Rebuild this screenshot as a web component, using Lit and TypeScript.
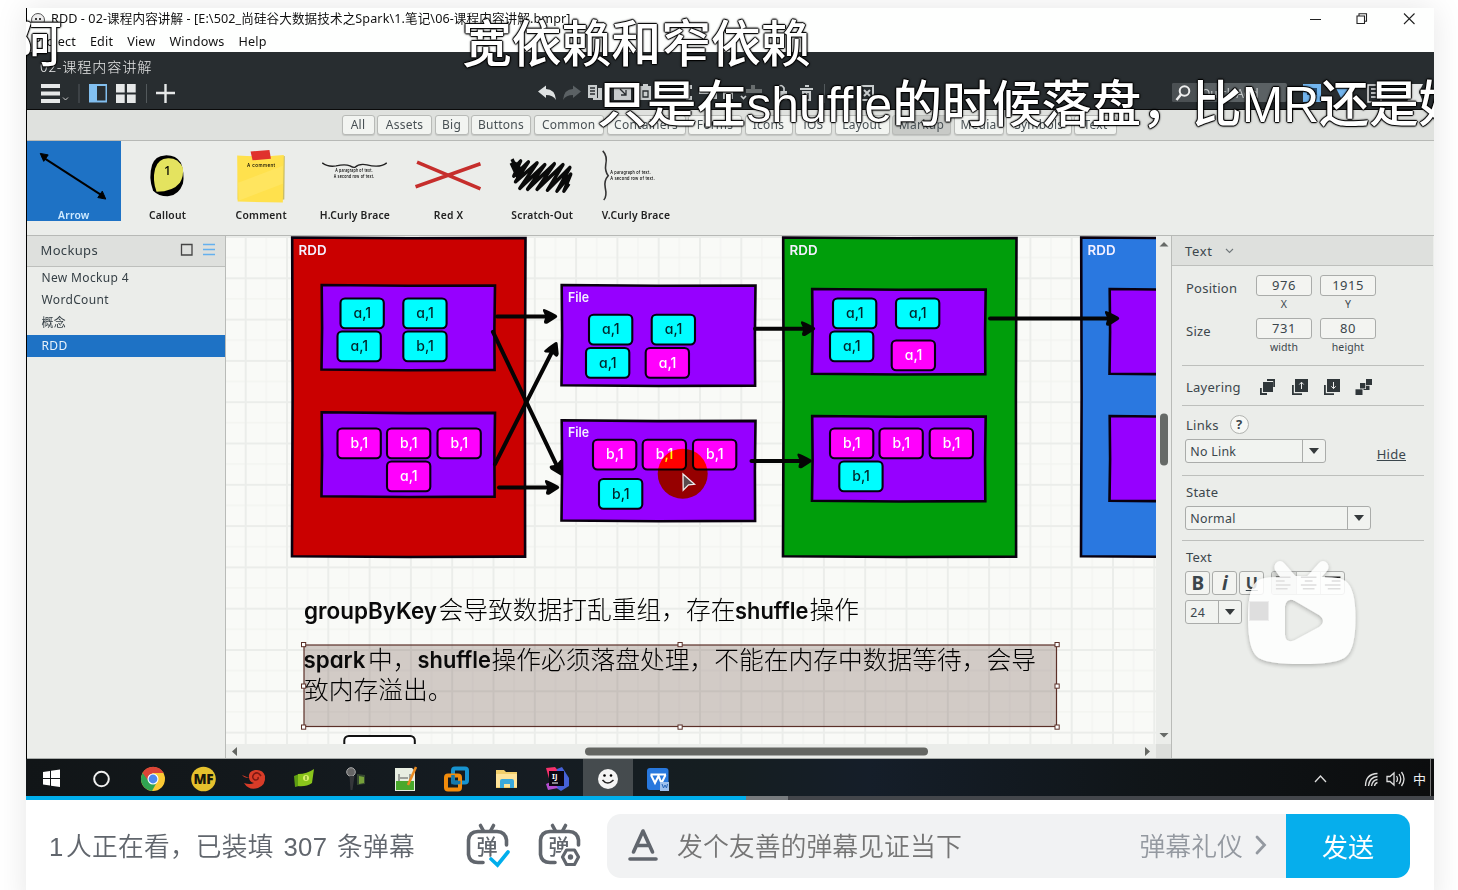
import { LitElement, html, svg, css } from "lit";
import { customElement } from "lit/decorators.js";

type Chip = [number, number, string, boolean];
const CHIPS: Chip[] = [
  [339.5, 297.5, "a,1", true], [402.3, 297.5, "a,1", true], [336.5, 330.5, "a,1", true], [402.3, 330.5, "b,1", true],
  [336.5, 427.5, "b,1", false], [386, 427.5, "b,1", false], [436.5, 427.5, "b,1", false], [386, 460.5, "a,1", false],
  [588, 313.7, "a,1", true], [650.7, 313.7, "a,1", true], [585, 347, "a,1", true], [644.7, 347, "a,1", false],
  [592, 438.7, "b,1", false], [641.7, 438.7, "b,1", false], [692, 438.7, "b,1", false], [598, 478, "b,1", true],
  [832, 297.5, "a,1", true], [895, 297.5, "a,1", true], [829, 330.5, "a,1", true], [890.7, 339.5, "a,1", false],
  [829, 427.5, "b,1", false], [878.5, 427.5, "b,1", false], [928.7, 427.5, "b,1", false], [838.3, 460.5, "b,1", true],
];
const BOXES: [number, number, number, number, string, string][] = [
  [291, 236.5, 235.5, 321.5, "#ca0000", "RDD"],
  [782, 236.5, 235.5, 321.5, "#009e0b", "RDD"],
  [1080, 236.5, 235.5, 321.5, "#2a78e0", "RDD"],
  [320.5, 284, 175.5, 87.3, "#9600ff", ""],
  [320.5, 411.3, 175.5, 86.7, "#9600ff", ""],
  [560.5, 284, 196, 103, "#9600ff", "File"],
  [560.5, 419.3, 196, 103, "#9600ff", "File"],
  [811, 288, 175.7, 87.5, "#9600ff", ""],
  [811, 415, 175.7, 87.5, "#9600ff", ""],
  [1108.5, 288, 175.7, 87.5, "#9600ff", ""],
  [1108.5, 415, 175.7, 87.5, "#9600ff", ""],
];
const ARROWS: [number, number, number, number][] = [
  [496, 316.5, 557.5, 316.5], [492.5, 331, 561.5, 475.5], [494.5, 465, 557, 342], [498, 487.5, 559.5, 487.5],
  [754, 328.8, 815.5, 328.8], [750.5, 461, 812, 461], [989, 318.5, 1119.5, 318.5],
];
const TABS: [string, number][] = [
  ["All", 33], ["Assets", 55], ["Big", 34], ["Buttons", 60], ["Common", 70.5],
  ["Containers", 79], ["Forms", 54], ["Icons", 48], ["iOS", 37], ["Layout", 55],
  ["Markup", 59], ["Media", 50], ["Symbols", 65.5], ["Text", 43],
];

@customElement("mockup-canvas")
export class MockupCanvas extends LitElement {
  static styles = css`
    :host { display: block; width: 930px; height: 508px; overflow: hidden; background: #f9faf7; }
    svg { display: block; }
    .title { font: 600 13px Inter, sans-serif; fill: #f4f0ff; }
    .chip { font: 500 14.5px Inter, sans-serif; font-feature-settings: "cv11", "ss01"; }
    .latin { font: 600 22.5px Inter, sans-serif; fill: #0a0a0a; font-feature-settings: "cv11"; }
    .cjk { font: 300 24.75px "Noto Sans CJK SC", sans-serif; fill: #000; }
    .halo { mix-blend-mode: multiply; }
  `;
  private box([x, y, w, h, fill, title]: (typeof BOXES)[number]) {
    const r = x + w - 1, b = y + h - 1;
    return svg`<path d="M${x + 1.2} ${y + 1} L${x + w / 2} ${y + 1.8} L${r} ${y + 1.6} L${r - 0.6} ${y + h / 2} L${r - 0.4} ${b - 0.4} L${x + w / 2} ${b} L${x + 1} ${b - 0.8} L${x + 1.6} ${y + h / 2}Z" fill=${fill} stroke="#09000f" stroke-width="2.6"/>
      <text class="title" x=${x + 7.6} y=${y + 18} textLength=${title === "RDD" ? 28 : 21} lengthAdjust="spacingAndGlyphs">${title}</text>`;
  }
  private arrow([x1, y1, x2, y2]: (typeof ARROWS)[number]) {
    const a = (Math.atan2(y2 - y1, x2 - x1) * 180) / Math.PI;
    const len = Math.hypot(x2 - x1, y2 - y1);
    return svg`<g transform="translate(${x1} ${y1}) rotate(${a})"><path d="M1 0H${len - 7}" stroke="#050505" stroke-width="4" stroke-linecap="round"/>
      <path d="M${len - 13.5} -7.5Q${len - 10} -6.5 ${len - 1} -1.5Q${len + 0.6} 0 ${len - 1} 1.2L${len - 10} 7Q${len - 14} 8 ${len - 13.5} 5L${len - 12} 0L${len - 14.5} -5.5Q${len - 15} -7.5 ${len - 13.5} -7.5Z" fill="#050505"/></g>`;
  }
  render() {
    const handles = [[303.5, 644.5], [680, 644.5], [1057, 644.5], [303.5, 686], [1057, 686], [303.5, 727], [680, 727], [1057, 727]];
    return html`<svg width="930" height="508" viewBox="226 236 930 508">
      <defs><pattern id="grid" x="245.7" y="278.3" width="41.3" height="41.3" patternUnits="userSpaceOnUse">
        <path d="M20.6 0V41.3M0 20.6H41.3" stroke="#f2f3f0" stroke-width="1.2"/>
        <path d="M0 0V41.3M41.3 0V41.3M0 0H41.3M0 41.3H41.3" stroke="#ebedea" stroke-width="2"/>
      </pattern></defs>
      <rect x="226" y="236" width="930" height="508" fill="url(#grid)"/>
      ${BOXES.map((b) => this.box(b))}
      ${CHIPS.map(([x, y, s, cyan]) => svg`<rect x=${x + 1} y=${y + 1} width="43.3" height="29.8" rx="4.5" fill=${cyan ? "#00fdff" : "#ff00fd"} stroke="#05000f" stroke-width="2.1"/>
        <text class="chip" x=${x + 22.8} y=${y + 20.6} text-anchor="middle" textLength="17.5" lengthAdjust="spacingAndGlyphs" fill=${cyan ? "#00262b" : "#fff"}>${s}</text>`)}
      ${ARROWS.map((a) => this.arrow(a))}
      <circle class="halo" cx="682.7" cy="473.7" r="25" fill="#ffff00"/>
      <path d="M683 474l11.5 10.3-6 .6-5.3 5.3z" fill="#5a4a4c" stroke="#eee" stroke-width="1.3"/>
      <text class="latin" x="304" y="618.5" textLength="133" lengthAdjust="spacingAndGlyphs">groupByKey</text>
      <text class="cjk" x="438.5" y="619">会导致数据打乱重组，存在</text>
      <text class="latin" x="735" y="618.5" textLength="73.5" lengthAdjust="spacingAndGlyphs">shuffle</text>
      <text class="cjk" x="809.5" y="619">操作</text>
      <rect x="304" y="645" width="752.5" height="81.5" fill="#4a261b" fill-opacity=".22" stroke="#5b3028" stroke-width="1.2"/>
      <text class="latin" x="303.5" y="668" textLength="62" lengthAdjust="spacingAndGlyphs">spark</text>
      <text class="cjk" x="368" y="668.5">中，</text>
      <text class="latin" x="417.5" y="668" textLength="73.5" lengthAdjust="spacingAndGlyphs">shuffle</text>
      <text class="cjk" x="491.5" y="668.5">操作必须落盘处理，不能在内存中数据等待，会导</text>
      <text class="cjk" x="304" y="698.5">致内存溢出。</text>
      ${handles.map(([x, y]) => svg`<rect x=${x - 2} y=${y - 2} width="4.2" height="4.2" fill="#fff" stroke="#5b3028"/>`)}
      <rect x="344.3" y="736" width="70.5" height="30" rx="4.5" fill="#fff" stroke="#111" stroke-width="2"/>
    </svg>`;
  }
}

@customElement("property-panel")
export class PropertyPanel extends LitElement {
  static styles = css`
    :host { display: flex; flex-direction: column; width: 262px; height: 522px; box-sizing: border-box; border-left: 1px solid #b9bbb8; background: #ebedea; font: 13px "Noto Sans", sans-serif; color: #3b464c; letter-spacing: .25px; line-height: 18px; }
    .head { height: 30px; box-sizing: border-box; border-bottom: 1px solid #bdbfbc; background: #dee0dd; padding-left: 13px; display: flex; align-items: center; gap: 12px; letter-spacing: .7px; }
    .sec { box-sizing: border-box; margin: 0 9px 0 10px; padding: 0 0 0 4px; border-bottom: 1px solid #bdbfbc; }
    .sec.last { border: 0; }
    .pos { height: 99.5px; padding-top: 8.5px; }
    .row { display: flex; height: 43.3px; }
    .row > .lab { width: 70px; padding-top: 4px; }
    .fields { display: flex; gap: 8px; }
    .f { width: 56px; text-align: center; font-size: 10.5px; letter-spacing: .1px; line-height: 17px; }
    .in { height: 19px; border: 1px solid #aaacaa; border-radius: 3px; background: #f3f4f1; font-size: 13px; line-height: 19px; letter-spacing: .5px; }
    .lay { height: 40px; display: flex; align-items: center; padding-top: 3px; }
    .lay .lab { width: 73.3px; }
    .lay svg { display: block; }
    .links { height: 70px; padding-top: 9px; }
    .line { display: flex; align-items: center; height: 20px; gap: 11px; }
    .q { box-sizing: border-box; width: 19px; height: 19px; border: 1.5px solid #b1b3b0; border-radius: 50%; background: #f7f8f5; text-align: center; font-weight: 700; line-height: 16px; letter-spacing: 0; }
    .split { display: flex; justify-content: space-between; }
    .select { display: flex; box-sizing: border-box; height: 24px; border: 1px solid #aaacaa; border-radius: 3px; background: #f1f3f0; font-size: 12.4px; line-height: 23px; margin-left: -.7px; }
    .select .v { flex: 1; padding-left: 4px; }
    .select .d { width: 22px; border-left: 1px solid #aaacaa; display: flex; align-items: center; justify-content: center; }
    .select .d::after { content: ""; border: 5.5px solid transparent; border-top: 6px solid #353a3c; border-bottom: 0; }
    .w1 { width: 141px; margin-top: 4.7px; }
    .w2 { width: 186px; margin-top: 4.7px; }
    .w3 { width: 57px; }
    .hide { text-decoration: underline; margin: 10px 18px 0 0; }
    .state { height: 65px; padding-top: 7.5px; }
    .text { padding-top: 7.5px; }
    .btns { display: flex; gap: 2px; margin: 4.5px 0 0 -.7px; }
    .b { box-sizing: border-box; width: 25px; height: 24px; border: 1px solid #aaacaa; border-radius: 3px; background: #f3f4f1; text-align: center; font-weight: 700; font-size: 19px; line-height: 22px; letter-spacing: 0; }
    .b.i { font-style: italic; } .b.u { text-decoration: underline; font-size: 16px; }
    .al { display: flex; margin-left: 5px; width: 74px; height: 24px; box-sizing: border-box; border: 1px solid #aaacaa; border-radius: 3px; background: #f1f3f0; overflow: hidden; }
    .al svg { flex: 1; border-left: 1px solid #b9bbb8; } .al svg:first-child { background: #d8dad7; border: 0; }
    .bot { display: flex; gap: 7px; margin-top: 5px; }
    .sw { width: 20px; height: 20px; background: #222; border: 1px solid #888; box-sizing: border-box; margin-top: 1px; }
  `;
  render() {
    const ln = (a: string) => html`<svg viewBox="0 0 24 22"><path d=${a} stroke="#222" stroke-width="1.6"/></svg>`;
    return html`
      <div class="head"><span>Text</span><svg width="9" height="6"><path d="M1 1l3.5 3.5L8 1" fill="none" stroke="#70777a" stroke-width="1.1"/></svg></div>
      <div class="sec pos">
        <div class="row"><span class="lab">Position</span><div class="fields"><div class="f"><div class="in">976</div>X</div><div class="f"><div class="in">1915</div>Y</div></div></div>
        <div class="row"><span class="lab">Size</span><div class="fields"><div class="f"><div class="in">731</div>width</div><div class="f"><div class="in">80</div>height</div></div></div>
      </div>
      <div class="sec lay"><span class="lab">Layering</span>
        <svg width="115" height="18" fill="#30373a"><g><rect x="4" y="4" width="10" height="10"/><path d="M8 1h8v8h-1.800V3H8zM1 10h1.800v5H8v2H1z"/></g>
          <g transform="translate(32)"><rect x="4" y="1" width="13" height="13"/><path d="M1 7h1.800v8.200H11V17H1z"/><path d="M10.500 11V4.500M8.300 6.500l2.200-2.300 2.200 2.300" stroke="#eee" fill="none"/></g>
          <g transform="translate(64)"><rect x="4" y="1" width="13" height="13"/><path d="M1 7h1.800v8.200H11V17H1z"/><path d="M10.500 4v6.500M8.300 8.300l2.200 2.300 2.200-2.300" stroke="#eee" fill="none"/></g>
          <g transform="translate(96)"><rect x="11" y="1" width="6" height="6"/><rect x="5" y="5" width="5.300" height="5.500"/><rect x="0.500" y="11.300" width="7" height="5.700"/><path d="M11 7.800h3.500v4.200H8.500v-1H11z"/></g></svg>
      </div>
      <div class="sec links"><div class="line"><span>Links</span><span class="q">?</span></div>
        <div class="split"><div class="select w1"><span class="v">No Link</span><span class="d"></span></div><span class="hide">Hide</span></div></div>
      <div class="sec state"><div>State</div><div class="select w2"><span class="v">Normal</span><span class="d"></span></div></div>
      <div class="sec last text"><div>Text</div>
        <div class="btns"><span class="b">B</span><span class="b i">i</span><span class="b u">U</span>
          <div class="al">${ln("M4 5h15M4 9h9M4 13h15M4 17h12")}${ln("M4 5h16M8 9h8M4 13h16M6 17h12")}${ln("M4 5h16M11 9h9M4 13h16M7 17h13")}</div></div>
        <div class="bot"><div class="select w3"><span class="v">24</span><span class="d"></span></div><span class="sw"></span></div>
      </div>`;
  }
}

@customElement("app-root")
export class AppRoot extends LitElement {
  static styles = css`
    :host { display: block; width: 1458px; height: 890px; overflow: hidden; background: #fff; font-family: "Noto Sans", "Noto Sans CJK SC", sans-serif; }
    .card { position: relative; width: 1408px; height: 900px; margin: 8px 24px 0 26px; background: #fff; box-shadow: 0 0 30px rgba(0, 0, 0, .1); display: flex; flex-direction: column; }
    .page { padding-top: .02px; height: 890px; overflow: hidden; }
    .video { position: relative; height: 792px; overflow: hidden; background: #000; display: flex; flex-direction: column; }
    .app { padding-left: 1px; }
    svg { display: block; }
    .win { height: 44px; background: #fefffe; display: flex; justify-content: space-between; color: #111; font-size: 12.6px; box-sizing: border-box; }
    .cap { display: flex; height: 24px; align-items: center; gap: 5px; padding-left: 3px; letter-spacing: .09px; white-space: nowrap; line-height: 22px; }
    .cap span { padding-bottom: 2px; }
    .menu { display: flex; gap: 14px; padding-left: 6.5px; height: 19px; align-items: center; letter-spacing: .18px; }
    .ctl { margin-right: 18px; margin-top: 3.5px; }
    .dark { height: 57px; background: #282d30; color: #e6e7e7; border-bottom: 1px solid #0a0a0a; }
    .doc { font: 300 14.2px/20px "Noto Sans CJK SC", sans-serif; letter-spacing: .8px; padding: 4px 0 0 13px; height: 24px; box-sizing: border-box; }
    .tools { display: flex; padding-left: 13px; height: 33px; }
    .tabs { height: 30px; background: #dfe1de; border-bottom: 1px solid #b7b9b6; display: flex; align-items: center; gap: 2.5px; padding-left: 314.5px; }
    .tab { box-sizing: border-box; height: 20px; border: 1px solid #b8bab7; border-radius: 3px; background: #f2f4f1; color: #485054; font-size: 12px; line-height: 18px; text-align: center; letter-spacing: .25px; box-shadow: 0 1px 1px #c3c5c2; flex: none; }
    .tab.on { background: #c8cac7; }
    .pal { height: 94px; border-bottom: 1px solid #b7b9b6; background: #ebedea; display: flex; }
    .item { width: 93.7px; height: 79.5px; display: flex; flex-direction: column; color: #222; font: 600 10.3px "Noto Sans", sans-serif; text-align: center; letter-spacing: .25px; line-height: 12px; white-space: nowrap; }
    .item svg { width: 93.7px; height: 68px; }
    .item.on { background: #1e72c5; color: #cfeaff; }
    .main { display: flex; height: 522px; background: #ebedea; border-bottom: 1px solid #a9adab; }
    .side { width: 198px; border-right: 1px solid #b9bbb8; color: #353f45; font-size: 12px; letter-spacing: .35px; }
    .sh { display: flex; align-items: center; height: 30.500px; border-bottom: 1px solid #bdbfbc; background: #dee0dd; font-size: 13px; padding: 0 10px 2px 13.5px; justify-content: space-between; box-sizing: border-box; }
    .si { height: 22.7px; line-height: 22.5px; padding-left: 14.5px; }
    .si.on { background: #1e72c5; color: #e8f2fa; }
    .mid { width: 945px; }
    .cv { display: flex; }
    .vs { width: 15px; height: 508px; }
    .hs { height: 14px; }
    .task { height: 37px; display: flex; background: linear-gradient(90deg, #111517, #151c22 35%, #151e21 50%, #151e29 60%, #101518 80%, #0c0d0e); }
    .ic { width: 50.6px; display: flex; align-items: center; justify-content: center; padding: 3px 0 0; box-sizing: border-box; }
    .ic.on { background: #454b4e; }
    .tray { margin-left: auto; width: 122px; display: flex; align-items: center; color: #eee; font-size: 13px; padding-top: 2px; border-right: 1px solid #777; margin-right: 3px; }
    .zh { margin-left: 7px; }
    .prog { height: 4px; background: #43464b; display: flex; }
    .p1 { width: 720px; background: #00aeec; } .p2 { width: 42px; background: #777b7e; }
    .dm { position: absolute; white-space: nowrap; color: #fff; font: 500 49.8px/56px "Liberation Sans", "Noto Sans CJK SC", sans-serif; text-shadow: 1px 0 1px #000, 0 1px 1px #000, -1px 0 1px #000, 0 -1px 1px #000, 0 0 3px #000; }
    .d1 { left: -14px; top: 9px; } .d2 { left: 436px; top: 9px; } .d3 { left: 571px; top: 69px; }
    .d4 { left: 1166px; top: 69px; }
    .tv { position: absolute; left: 1214px; top: 545px; }
    .foot { display: flex; align-items: center; height: 92px; padding-left: 23px; color: #61666d; }
    .watch { font: 350 25.7px/36px "Liberation Sans", "Noto Sans CJK SC", sans-serif; width: 403px; white-space: nowrap; word-spacing: 2.4px; letter-spacing: .27px; padding-top: 1px; }
    .one { margin-right: 2.5px; }
    .dmi { width: 72px; margin-top: -2px; }
    .inp { width: 679px; height: 64px; margin-left: 11px; box-sizing: border-box; padding: 0 19px 2px 20px; border-radius: 14px 0 0 14px; background: #f1f2f3; display: flex; align-items: center; font: 350 25.9px/36px "Noto Sans CJK SC", sans-serif; color: #757575; }
    .ph { margin-left: 18px; flex: 1; }
    .et { color: #9499a0; margin-right: 12px; }
    .send { width: 124px; height: 64px; border-radius: 0 14px 14px 0; background: #06aeec; color: #fff; font: 400 26px/63px "Noto Sans CJK SC", sans-serif; text-align: center; }
    .gl { font-family: "Noto Sans CJK SC", sans-serif; }
    .tiny { font: 500 4.6px Inter, sans-serif; }
  `;

  private palette() {
    return [
      ["Arrow", svg`<path d="M15 16L77 56" stroke="#000" stroke-width="2"/><path d="M13 12.500l8 1.500-4.500 6.500zM79 58.500l-8-1.500 4.500-6.500z" stroke="#000" stroke-linejoin="round"/>`],
      ["Callout", svg`<path d="M31 24Q34 15 44 14.500Q55 14 60 22Q64 33 62 43Q58 54 48 55.500Q38 56 32 50Q27 37 31 24Z"/><path d="M34 28Q37 18 47 17.500Q57 17 62 27Q63 36 59 42Q52 51 35.500 51Q31 40 34 28Z" fill="#e4e35f"/><text x="43" y="34.500" font-size="12.500" font-weight="500">1</text>`],
      ["Comment", svg`<path d="M24 16q24 4 47-1l-.5 44q-25 2-47 0z" fill="#c9bd66"/><path d="M23 14.500q24 2 47-.5l-1 48-45.500-1z" fill="#ffe14d"/><path d="M24 42l45-17v18L25 60z" fill="#ffe55f"/><path d="M36.500 10.500l19-1.500 1.500 9-18.500 1.500z" fill="#e0322d"/><text class="tiny" x="33" y="26" textLength="28.500">A comment</text>`],
      ["H.Curly Brace", svg`<path d="M14 22q6 4.500 14 3 9-2 14 0 3 2 5 1.500 4-4 12-2.500 13 3.500 20-2" fill="none" stroke="#222" stroke-width="1.400"/><text class="tiny" x="27" y="31.500" textLength="38" lengthAdjust="spacingAndGlyphs">A paragraph of text.</text><text class="tiny" x="25.500" y="37" textLength="41" lengthAdjust="spacingAndGlyphs">A second row of text.</text>`],
      ["Red X", svg`<path d="M16.500 22L77 47.500M15 45.500L77 23.500" stroke="#c62e2c" stroke-width="3.600" stroke-linecap="square"/>`],
      ["Scratch-Out", svg`<g transform="translate(5.500 3) scale(.87 .95)"><path d="M13 16l4 8 6-6-8 16 17-15-15 21 25-20-20 27 29-25-20 26 31-27-20 27 30-26-18 27 26-24-15 25 16-18-8 18 6-8M12 20l8 16M16 20l12 12" fill="none" stroke="#0a0a0a" stroke-width="3.900" stroke-linejoin="round"/></g>`],
      ["V.Curly Brace", svg`<path d="M13.500 10q5 5 3 14-1 6 2.500 11-4.500 5-3 12 2 9-1.500 12.500" fill="none" stroke="#333" stroke-width="1.600"/><text class="tiny" x="21" y="33.500" textLength="41" lengthAdjust="spacingAndGlyphs">A paragraph of text.</text><text class="tiny" x="21" y="39.500" textLength="45" lengthAdjust="spacingAndGlyphs">A second row of text.</text>`],
    ] as const;
  }

  private taskIcons() {
    const I = (c: unknown) => html`<svg width="26" height="26" viewBox="0 0 26 26">${c}</svg>`;
    return [
      I(svg`<path d="M5 6l7-1v7H5zM13 4.800l9-1.300V12h-9zM5 13h7v6.500l-7-1zM13 13h9v8l-9-1.300z" fill="#fff"/>`),
      I(svg`<circle cx="12.500" cy="13" r="7.300" fill="none" stroke="#f0f0f0" stroke-width="2"/>`),
      I(svg`<circle cx="14" cy="13" r="12" fill="#fbc934"/><path d="M13.500 13L3.600 7A12 12 0 0 0 13 25l5-9z" fill="#30a352"/><path d="M3.600 7a12 12 0 0 1 21 0H13.500l-4 8z" fill="#db4437"/><circle cx="14" cy="13" r="5.500" fill="#fff"/><circle cx="14" cy="13" r="4.400" fill="#4d89ee"/>`),
      I(svg`<circle cx="13.500" cy="13" r="12.300" fill="#e5c12d"/><text x="13.500" y="18" font-size="13.500" font-weight="800" text-anchor="middle" textLength="20" fill="#17160b" font-family="Open Sans">MF</text>`),
      I(svg`<path d="M1 9q2 3 7 3-1-7 6-8 8-1 10 6 1 9-7 12-9 3-14-5 6 2 10 0-5-1-5-6 1-5 6-5 6 1 4 6-2 4-5 2" fill="#d83c28"/><path d="M20 10q-3-5-7-2-3 4 1 6 4 0 3-3" fill="none" stroke="#7d1812" stroke-width="1.500"/>`),
      I(svg`<path d="M3 10l5-2v12l-4 1z" fill="#5e9d12"/><path d="M7 8q9 0 16-5l-2 14q-6 4-14 3z" fill="#8ac51b"/><circle cx="15" cy="12" r="3" fill="#d9ef6b"/><path d="M15 10v4" stroke="#487d09"/>`),
      I(svg`<circle cx="9" cy="6" r="4.300" fill="#666" stroke="#aaa"/><path d="M7.500 10h5l-2 14h-2z" fill="#34363a"/><path d="M15 8l8 1v9l-8 1z" fill="#354830"/><path d="M17 10l5 1v6l-5 1z" fill="#76a03a"/>`),
      I(svg`<path d="M3 2h17l3 3v20H3z" fill="#e8eee2"/><path d="M4 15h18v9H4z" fill="#49a82c"/><path d="M7 8v7M8 12h8m2-4v6" stroke="#555"/><path d="M24 1l-8 18" stroke="#e98a21" stroke-width="2.500"/>`),
      I(svg`<rect x="10" y="2.500" width="14" height="14" rx="2" fill="none" stroke="#1793d0" stroke-width="4"/><rect x="3" y="9.500" width="14" height="14" rx="2" fill="none" stroke="#f28c0c" stroke-width="4"/><path d="M10 9v7.500h7.500" fill="none" stroke="#1478ad" stroke-width="3.500"/>`),
      I(svg`<path d="M2 4h8l2 2h11v16H2z" fill="#f3cf6b"/><path d="M2 8h21v13H2z" fill="#ffe49a"/><path d="M6 22v-7q0-2 2-2h10q2 0 2 2v7h-4v-4h-6v4z" fill="#3ba9dc"/>`),
      I(svg`<path d="M2 2l9-1 5 6-10 9z" fill="#f5316b"/><path d="M13 3l5-2 7 11v8l-8 5-6-4z" fill="#4662d8"/><path d="M2 18l7-3 5 7-10 2z" fill="#b34ed0"/><rect x="5" y="5" width="15" height="15" fill="#0b0712"/><text x="8" y="13" font-size="7.500" font-weight="700" fill="#fff">IJ</text><path d="M8 17h6" stroke="#fff"/>`),
      I(svg`<circle cx="13" cy="13" r="10" fill="#f4f4f4"/><circle cx="9.500" cy="9.500" r="1.300"/><circle cx="16" cy="9.500" r="1.300"/><path d="M7.500 14q5 6 11 0" fill="none" stroke="#222" stroke-width="1.500"/>`),
      I(svg`<rect x="2" y="2" width="21.500" height="22" rx="3" fill="#2878dd"/><path d="M5.500 8.500h15.500M6 9l4 8 3.500-7 3 7 4-8" fill="none" stroke="#fff" stroke-width="2"/><rect x="15" y="16" width="9" height="9" fill="#9dc0ee"/><path d="M17 18l1.500 4 1.500-3 1.500 3 1-4" fill="none" stroke="#2764b7"/>`),
    ];
  }

  private tv(extra: unknown) {
    return html`<svg class="dmi" width="48" height="46" viewBox="12 0 48 46"><g transform="translate(12)"><g fill="none" stroke="#61666d" stroke-width="3.600" stroke-linecap="round">
      <path d="M16.500 3.500l3 5.500M29.500 3.500l-3 5.500"/><path d="M19 40.500H14q-8.500 0-9.500-8V18q.5-8 9.500-8.500h19q8.500.5 9.500 8.500v5"/></g>
      <text class="gl" x="12.500" y="32" font-size="21" font-weight="500" fill="#61666d">弹</text>${extra}</g></svg>`;
  }

  render() {
    return html`<div class="page"><div class="card">
      <div class="video">
        <div class="app">
          <div class="win">
            <div>
              <div class="cap"><svg width="16" height="16"><circle cx="8" cy="8" r="6.500" fill="#eee" stroke="#555"/><circle cx="6" cy="7" r="1"/><circle cx="10" cy="7" r="1"/></svg><span>RDD - 02-课程内容讲解 - [E:\\502_尚硅谷大数据技术之Spark\\1.笔记\\06-课程内容讲解.bmpr]</span></div>
              <div class="menu"><span>Project</span><span>Edit</span><span>View</span><span>Windows</span><span>Help</span></div>
            </div>
            <svg class="ctl" width="106" height="14" fill="none" stroke="#222" stroke-width="1.100"><path d="M0 7.500h11M94 1.500l10.500 10.500M104.500 1.500L94 12"/><path d="M47 4h7.500v7.500H47zM49 4V1.800h7.500v7.500h-2"/></svg>
          </div>
          <div class="dark">
            <div class="doc">02-课程内容讲解</div>
            <div class="tools">
              <svg width="498" height="33" fill="#e6e8e8"><path d="M1 8h19v4H1zM1 15.500h19v4H1zM1 23h19v4H1z"/><path d="M23 21.500l2.500 2.500 2.500-2.500" fill="none" stroke="#ccc"/><path d="M39 8v19M106.500 8v19" stroke="#53595c"/>
                <path d="M49 8h18v18.500H49z" fill="#82bfef"/><path d="M57 10h8.500v14.500H57z" fill="#282d30"/><path d="M76 8h8.700v8.500H76zM87 8h8.700v8.500H87zM76 18.500h8.700V27H76zM87 18.500h8.700V27H87z"/><path d="M116 17h19M125.500 8v19" stroke="#e6e8e8" stroke-width="2.400"/></svg>
              <svg width="634" height="33" fill="#dfe2e2"><path d="M0 15.500l8-6v3.500q9 0 10 11-3-5-10-5v3z"/><path d="M43 15.500l-8-6v3.500q-9 0-10 11 3-5 10-5v3z" fill="#5b6164"/>
                <g fill="#c8cccd"><path d="M50 9h9v13h-9zM60 12h4v12h-9v-2h5z"/><path d="M76 9h17v15H76z"/><path d="M102 10h11v14h-11z"/><path d="M105 8h5v4h-5z"/><path d="M148 9h6v4h-6zM148 20h6v4h-6zM150 13h2v7h-2z"/><path d="M161 16h16v2h-16zM174 17h5v6h-5zM185 15h10v8h-10z"/><path d="M213 9h4v4h7v4h-16v-4h5z" opacity=".4"/><path d="M238 15h11v9h-11z"/><path d="M262 12h13v2h-13zM264 15h9v10h-9zM267 9h4v2h-4z"/></g>
                <path d="M52 12h5M52 15h5M52 18h5M82 13l6 6m0-5v5h-5M105 15v6h5v-6zM267 17v6M270 17v6" stroke="#282d30" stroke-width="1.300" fill="none"/><path d="M240 15v-3q3-5 6 0v3M203 20l2.500 2.500L208 20" fill="none" stroke="#c8cccd" stroke-width="1.700"/><path d="M286.500 8v19" stroke="#53595c"/><path d="M323 10h12v14h-12zM326 14l6 6M332 14l-6 6" fill="none" stroke="#c8cccd" stroke-width="2"/></svg>
              <svg width="262" height="33"><rect x="0" y="7" width="115" height="19" rx="2" fill="#5b6164"/><path d="M0 9q0-2 2-2h22v19H2q-2 0-2-2z" fill="#4b5053"/><circle cx="12.500" cy="15" r="4.800" fill="none" stroke="#eee" stroke-width="2"/><path d="M9 18.500L4.500 24" stroke="#eee" stroke-width="2.500"/><text x="29" y="21.500" font-size="12" fill="#c9cdce">Quick Add</text>
                <path d="M131 8h18v18h-18z" fill="#72b5ef"/><path d="M135 12h10v7h-10z" fill="#274c70"/><path d="M164 12h17v12h-11z" fill="#72b5ef"/><path d="M196 9h13v17h-13zM199 13h7M199 17h7M199 21h7" fill="none" stroke="#e6e8e8" stroke-width="1.500"/><path d="M235 8h16l-4 8 4 10h-16l4-10z" fill="#e6e8e8"/></svg>
            </div>
          </div>
          <div class="tabs">${TABS.map(([t, w]) => html`<span class="tab ${t === "Markup" ? "on" : ""}" style="width:${w}px">${t}</span>`)}</div>
          <div class="pal">${this.palette().map(([t, g], i) => html`<div class="item ${i ? "" : "on"}"><svg viewBox="0 0 93.700 68">${g}</svg>${t}</div>`)}</div>
          <div class="main">
            <div class="side">
              <div class="sh"><span>Mockups</span><svg width="35" height="14" fill="none"><path d="M1.500 1.500h10.500v10.500H1.500z" stroke="#444" stroke-width="1.300"/><path d="M23 1.500h12M23 6.500h12M23 11.500h12" stroke="#64b0ee" stroke-width="1.500"/></svg></div>
              <div class="si">New Mockup 4</div><div class="si">WordCount</div><div class="si">概念</div><div class="si on">RDD</div>
            </div>
            <div class="mid">
              <div class="cv"><mockup-canvas></mockup-canvas>
                <svg class="vs" width="15" height="508" fill="#666a67"><path d="M3.500 10.500L8 6l4.500 4.500zM3.500 497L8 501.500l4.500-4.500z"/><rect x="4" y="177.500" width="8" height="52" rx="4"/></svg></div>
              <svg class="hs" width="945" height="14" fill="#646662"><rect x="930" width="15" height="14" fill="#dcdedb"/><path d="M11 3v9L6 7.500zM919 3v9l5-4.500z"/><rect x="359" y="3.500" width="343" height="8" rx="4"/></svg>
            </div>
            <property-panel></property-panel>
          </div>
        </div>
        <div class="task">${this.taskIcons().map((g, i) => html`<div class="ic ${i === 11 ? "on" : ""}">${g}</div>`)}
          <div class="tray"><svg width="98" height="26" viewBox="-2 0 98 26" fill="none" stroke="#ddd" stroke-width="1.300"><path d="M5 16l5.500-6 5.500 6"/><path d="M55.500 20q0-12 12-12.500M58.500 20q1-9 9-9.500M61.500 20q1-6 6-6.500M64.500 20q.5-3 3-3.500"/><path d="M77 10.500h3l4-3.500v12l-4-3.500h-3zM86.500 10q2 3 0 6M89 8q3.500 5 0 10M91.500 6q5 7 0 14"/></svg><span class="zh">中</span></div>
        </div>
        <div class="prog"><div class="p1"></div><div class="p2"></div></div>
        <div class="dm d1">阿</div><div class="dm d2">宽依赖和窄依赖</div><div class="dm d3">只是在shuffle的时候落盘，</div><div class="dm d4">比MR还是好</div>
        <svg class="tv" width="124" height="120" viewBox="0 0 124 120"><defs><filter id="sh" x="-20%" y="-20%" width="140%" height="140%"><feDropShadow dx="0" dy="1.500" stdDeviation="2" flood-opacity=".32"/></filter></defs>
          <g filter="url(#sh)" opacity=".85" fill="#fff"><path fill-rule="evenodd" d="M36 10q4-4 8 0l11.500 13h12L79 10q4-4 8 0 3 4 0 8l-5.500 6q18-.5 24 4 10 7 10 37 0 30-9 38-7 8-45 8t-45-8Q8 95 8 65q0-30 9-37 6-4.500 23-4l-5-7q-1.500-4 1-7zM45 53v29q1 9 10 5l24-13q8-6 0-12L55 48q-8-4-10 5z"/></g></svg>
      </div>
      <div class="foot"><div class="watch"><span class="one">1</span>人正在看，已装填 307 条弹幕</div>
        ${this.tv(svg`<path d="M26 36l7 7 11-15" stroke="#fff" stroke-width="7" fill="none"/><path d="M27 37l6.500 6L44 30" fill="none" stroke="#00aeec" stroke-width="3.600" stroke-linecap="round"/>`)}
        ${this.tv(svg`<path d="M29 26.500h11l5.500 8.500-5.500 9H29L23.500 35z" fill="#fff" stroke="#fff" stroke-width="3"/><path d="M30.500 28h8l4 7-4 7.500h-8l-4-7.500z" fill="none" stroke="#61666d" stroke-width="3.200" stroke-linejoin="round"/><circle cx="34.500" cy="35" r="2.700" fill="#61666d"/>`)}
        <div class="inp"><svg width="32" height="36" viewBox="0 0 32 36" fill="none" stroke="#61666d" stroke-width="3.600" stroke-linecap="round" stroke-linejoin="round"><path d="M6.500 25L16 4l9.500 21M10 18.500h12M3 32h26"/></svg>
          <span class="ph">发个友善的弹幕见证当下</span><span class="et">弹幕礼仪</span><svg width="12" height="20" fill="none" stroke="#9499a0" stroke-width="2.800" stroke-linecap="round"><path d="M2 2l7.500 8L2 18"/></svg></div>
        <div class="send">发送</div></div>
    </div></div>`;
  }
}
